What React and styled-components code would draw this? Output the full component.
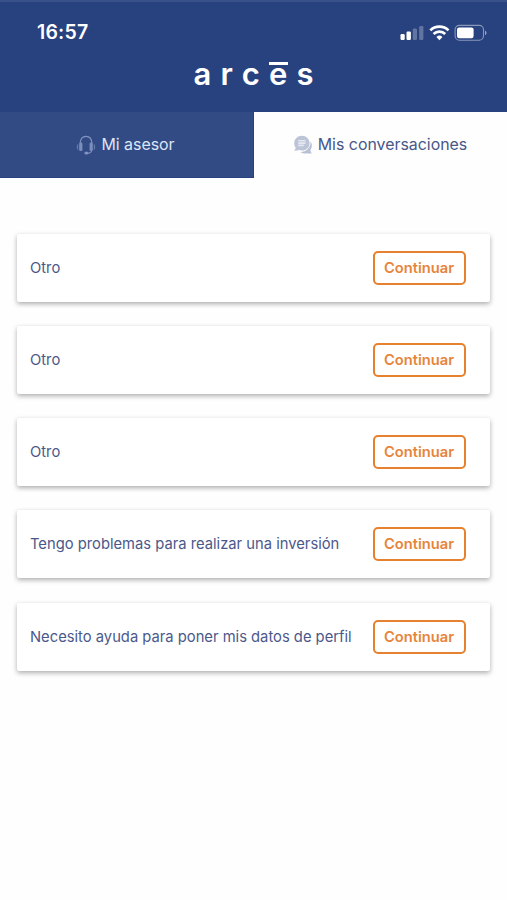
import React from "react";
import styled, { createGlobalStyle } from "styled-components";

const conversations = [
  { id: 1, title: "Otro" },
  { id: 2, title: "Otro" },
  { id: 3, title: "Otro" },
  { id: 4, title: "Tengo problemas para realizar una inversión" },
  { id: 5, title: "Necesito ayuda para poner mis datos de perfil" },
];

export default function App() {
  return (
    <Page>
      <GlobalStyle />
      <Header>
        <StatusBar>
          <Time>16:57</Time>
          <StatusIcons />
        </StatusBar>
        <Logo>
          <span>a</span>
          <span>r</span>
          <span>c</span>
          <Accent>e</Accent>
          <span>s</span>
        </Logo>
      </Header>
      <Tabs>
        <Tab>
          <HeadsetIcon />
          <TabLabel>Mi asesor</TabLabel>
        </Tab>
        <Tab $active>
          <ChatIcon />
          <TabLabel>Mis conversaciones</TabLabel>
        </Tab>
      </Tabs>
      <List>
        {conversations.map((item) => (
          <Card key={item.id}>
            <Title>{item.title}</Title>
            <Button>Continuar</Button>
          </Card>
        ))}
      </List>
    </Page>
  );
}

function StatusIcons() {
  return (
    <svg width="90" height="20" viewBox="0 0 90 20">
      {/* signal */}
      <g fill="#fff">
        <rect x="2.5" y="12" width="4.2" height="6" rx="1.2" />
        <rect x="8.5" y="9.5" width="4.4" height="8.5" rx="1.2" />
        <rect x="14.8" y="6.5" width="4.2" height="11.5" rx="1.2" opacity="0.27" />
        <rect x="21.2" y="4" width="4.2" height="14" rx="1.2" opacity="0.27" />
      </g>
      {/* wifi */}
      <g fill="none" stroke="#fff" strokeWidth="2.7">
        <path d="M32.3 8.4a13 13 0 0 1 18.2 0" />
        <path d="M35.6 12a8.3 8.3 0 0 1 11.6 0" />
      </g>
      <path d="M41.4 18.2l-3-3.2a4.4 4.4 0 0 1 6 0z" fill="#fff" />
      {/* battery */}
      <rect x="57.1" y="3.4" width="28.4" height="14.8" rx="4.2" fill="none" stroke="#fff" strokeWidth="1.1" opacity="0.45" />
      <rect x="59" y="5.400" width="16.600" height="10.900" rx="2.200" fill="#fff" />
      <path d="M87 8.500c2 .8 2 3.900 0 4.700z" fill="#fff" opacity="0.5" />
    </svg>
  );
}

function HeadsetIcon() {
  return (
    <svg width="20" height="20" viewBox="0 0 20 20" fill="none">
      <path d="M4.2 8.5C4.2 3.8 6.6 1.4 10 1.4s5.8 2.4 5.8 7.1" stroke="#8094bf" strokeWidth="1.2" />
      <rect x="3.2" y="7.6" width="3.2" height="8.4" rx="1.3" fill="#7a8fbb" />
      <rect x="13.6" y="7.6" width="3.2" height="8.4" rx="1.3" fill="#7a8fbb" />
      <path d="M2.2 8.8C.4 9.6.4 14.4 2.2 15.2zM17.8 8.8c1.8.8 1.8 5.6 0 6.4z" fill="#647bad" />
      <path d="M15.6 15.8c-.4 1.8-2 2.4-4.4 2.4" stroke="#7a8fbb" strokeWidth="1.1" />
      <rect x="8.4" y="16.8" width="4" height="2.6" rx="1.3" fill="#8094bf" />
    </svg>
  );
}

function ChatIcon() {
  return (
    <svg width="20" height="20" viewBox="0 0 20 20">
      <path d="M17.6 6.2c1.8 2.8 1.7 6.3-.2 8.8.1 1.4.7 2.5 1.6 3.4-2 .3-3.8.3-5.2-.1-2.3.5-4.6 0-6.4-1.3 5.8.2 10.5-4.6 10.2-10.8z" fill="#b7c0d5" />
      <path d="M8.9.8c4.3 0 7.7 3.2 7.7 7.4s-3.4 7.4-7.7 7.4c-1 0-2-.2-2.9-.5-1.4.7-3.1.9-4.9.7 1-.9 1.5-2 1.5-3.2A7.2 7.2 0 0 1 1.2 8.2C1.2 4 4.6.8 8.9.8z" fill="#bcc4d7" />
      <path d="M5.2 5h7.4v1.6H5.2zM5.2 7.3h7.4v1.6H5.2zM5.2 9.6h5.6v1.6H5.2z" fill="#e3e7f0" />
    </svg>
  );
}

const GlobalStyle = createGlobalStyle`
  * {
    box-sizing: border-box;
  }
  body {
    margin: 0;
    background-color: #fefefe;
    font-family: Inter, "Liberation Sans", sans-serif;
  }
`;

const Page = styled.div`
  width: 507px;
  min-height: 900px;
  background-color: #fefefe;
`;

const Header = styled.header`
  height: 112px;
  background-color: #28427f;
  border-top: 2px solid #38518a;
  color: white;
`;

const StatusBar = styled.div`
  display: flex;
  align-items: center;
  justify-content: space-between;
  height: 58px;
  padding: 1px 19px 0 37px;
`;

const Time = styled.span`
  font-size: 19.5px;
  font-weight: 600;
  letter-spacing: 0.2px;
`;

const Logo = styled.div`
  display: flex;
  justify-content: space-between;
  width: 120px;
  height: 28px;
  margin: 0 auto;
  font-size: 31px;
  font-weight: 600;
  line-height: 28px;
`;

// The bar over the letter is wider than a regular macron
const Accent = styled.span`
  position: relative;

  &::before {
    content: "";
    position: absolute;
    top: 2px;
    left: 0;
    width: 19px;
    height: 3px;
    background-color: white;
  }
`;

const Tabs = styled.nav`
  display: flex;
  height: 66px;
`;

const Tab = styled.div`
  display: flex;
  align-items: center;
  justify-content: center;
  gap: 5px;
  width: ${(props) => (props.$active ? "253px" : "254px")};
  padding-right: ${(props) => (props.$active ? "0" : "2px")};
  background-color: ${(props) => (props.$active ? "#fefefe" : "#334b85")};
  border-bottom: 1px solid ${(props) => (props.$active ? "#fefefe" : "#28427f")};
  border-right: 1px solid ${(props) => (props.$active ? "#fefefe" : "#28427f")};
  color: ${(props) => (props.$active ? "#485789" : "#dce5f5")};
`;

const TabLabel = styled.span`
  padding-top: 1px;
  font-size: 15.9px;
  line-height: 20px;
`;

const List = styled.main`
  display: flex;
  flex-direction: column;
  gap: 24.25px;
  padding: 55.5px 17px 0;
`;

const Card = styled.div`
  display: flex;
  align-items: center;
  justify-content: space-between;
  height: 68px;
  padding: 0 24.5px 0 13px;
  background-color: white;
  border-radius: 2px;
  box-shadow: 0 2px 5px rgba(0, 0, 0, 0.32);
`;

const Title = styled.span`
  color: #4b588a;
  font-size: 14.75px;
`;

const Button = styled.button`
  width: 93px;
  height: 34px;
  padding: 0;
  border: 2px solid #e6812f; // orange
  border-radius: 5px;
  background-color: white;
  color: #e6853a;
  font-family: inherit;
  font-size: 14.7px;
  font-weight: 600;
  cursor: pointer;
`;
